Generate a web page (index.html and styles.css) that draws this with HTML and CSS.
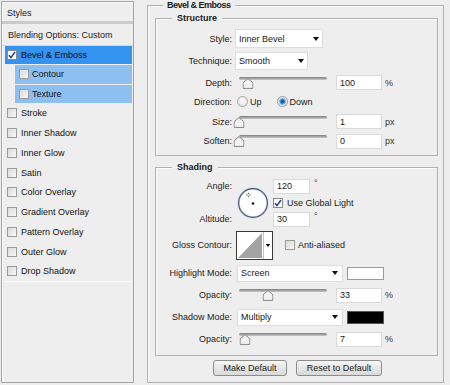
FILE: index.html
```html
<!DOCTYPE html>
<html lang="en">
<head>
    <meta charset="UTF-8">
    <title>Layer Style</title>
    <link rel="stylesheet" href="styles.css">
</head>
<body>
    <div class="dialog">
        <aside class="styles-list">
            <div class="list-head">Styles</div>
            <div class="list-blend">Blending Options: Custom</div>
            <ul class="effects">
                <li class="effect selected">
                    <span class="check on"><svg width="8" height="8" viewBox="0 0 8 8"><path d="M1 4.2 L3 6.6 L7 1" fill="none" stroke="#23408e" stroke-width="1.5"/></svg></span>
                    Bevel &amp; Emboss
                </li>
                <li class="effect sub"><span class="check"></span>Contour</li>
                <li class="effect sub"><span class="check"></span>Texture</li>
                <li class="effect"><span class="check"></span>Stroke</li>
                <li class="effect"><span class="check"></span>Inner Shadow</li>
                <li class="effect"><span class="check"></span>Inner Glow</li>
                <li class="effect"><span class="check"></span>Satin</li>
                <li class="effect"><span class="check"></span>Color Overlay</li>
                <li class="effect"><span class="check"></span>Gradient Overlay</li>
                <li class="effect"><span class="check"></span>Pattern Overlay</li>
                <li class="effect"><span class="check"></span>Outer Glow</li>
                <li class="effect last"><span class="check"></span>Drop Shadow</li>
            </ul>
        </aside>

        <fieldset class="group outer">
            <legend>Bevel &amp; Emboss</legend>

            <fieldset class="group structure">
                <legend>Structure</legend>
                <div class="form structure-form">
                    <div class="row">
                        <span class="label">Style:</span>
                        <div class="select style-select">Inner Bevel<i class="arrow"></i></div>
                    </div>
                    <div class="row">
                        <span class="label">Technique:</span>
                        <div class="select technique-select">Smooth<i class="arrow"></i></div>
                    </div>
                    <div class="row">
                        <span class="label">Depth:</span>
                        <div class="slider"><div class="track"></div><span class="thumb" style="left: 10%"><svg width="11" height="11" viewBox="0 0 11 11"><path d="M5.5 0.6 L10.4 4.8 V10.4 H0.6 V4.8 Z" fill="#f2f2f2" stroke="#858585"/></svg></span></div>
                        <div class="field">100</div>
                        <span class="unit">%</span>
                    </div>
                    <div class="row">
                        <span class="label">Direction:</span>
                        <span class="radio first"></span><span class="radio-text">Up</span>
                        <span class="radio on second"></span><span class="radio-text">Down</span>
                    </div>
                    <div class="row">
                        <span class="label">Size:</span>
                        <div class="slider"><div class="track"></div><span class="thumb" style="left: 0.4%"><svg width="11" height="11" viewBox="0 0 11 11"><path d="M5.5 0.6 L10.4 4.8 V10.4 H0.6 V4.8 Z" fill="#f2f2f2" stroke="#858585"/></svg></span></div>
                        <div class="field">1</div>
                        <span class="unit">px</span>
                    </div>
                    <div class="row">
                        <span class="label">Soften:</span>
                        <div class="slider"><div class="track"></div><span class="thumb" style="left: 0%"><svg width="11" height="11" viewBox="0 0 11 11"><path d="M5.5 0.6 L10.4 4.8 V10.4 H0.6 V4.8 Z" fill="#f2f2f2" stroke="#858585"/></svg></span></div>
                        <div class="field">0</div>
                        <span class="unit">px</span>
                    </div>
                </div>
            </fieldset>

            <fieldset class="group shading">
                <legend>Shading</legend>
                <div class="form shading-form">
                    <div class="angle-block">
                        <span class="label angle-label">Angle:</span>
                        <div class="dial">
                            <svg width="32" height="32" viewBox="0 0 32 32">
                                <circle cx="16" cy="16" r="14.4" fill="#fff" stroke="#cdd2de" stroke-width="2.4"/>
                                <circle cx="16" cy="16" r="14.4" fill="none" stroke="#4e5b84" stroke-width="1.1"/>
                                <circle cx="16" cy="16.5" r="1.3" fill="#111"/>
                                <g fill="#444">
                                    <rect x="10.9" y="5.6" width="0.9" height="1.4"/>
                                    <rect x="10.9" y="8.8" width="0.9" height="1.4"/>
                                    <rect x="9.2" y="7.5" width="1.4" height="0.9"/>
                                    <rect x="12.1" y="7.5" width="1.4" height="0.9"/>
                                </g>
                            </svg>
                        </div>
                        <div class="angle-field">
                            <div class="field small">120</div>
                            <span class="unit deg">°</span>
                        </div>
                        <div class="global-light">
                            <span class="check on"><svg width="8" height="8" viewBox="0 0 8 8"><path d="M1 4.2 L3 6.6 L7 1" fill="none" stroke="#23408e" stroke-width="1.5"/></svg></span>
                            <span>Use Global Light</span>
                        </div>
                        <span class="label altitude-label">Altitude:</span>
                        <div class="altitude-field">
                            <div class="field small">30</div>
                            <span class="unit deg">°</span>
                        </div>
                    </div>

                    <div class="row">
                        <span class="label">Gloss Contour:</span>
                        <div class="contour">
                            <svg width="37" height="29" viewBox="0 0 37 29">
                                <rect x="0.5" y="0.5" width="36" height="28" fill="#fff" stroke="#3a3a3a"/>
                                <polygon points="2,27 26,2 26,27" fill="#a4a4a4"/>
                                <line x1="27.5" y1="1" x2="27.5" y2="28" stroke="#c4c4c4"/>
                                <polygon points="29.8,13 34.2,13 32,16" fill="#000"/>
                            </svg>
                        </div>
                        <span class="check anti"></span>
                        <span class="check-text">Anti-aliased</span>
                    </div>
                    <div class="row">
                        <span class="label">Highlight Mode:</span>
                        <div class="select mode-select">Screen<i class="arrow"></i></div>
                        <span class="swatch white"></span>
                    </div>
                    <div class="row">
                        <span class="label">Opacity:</span>
                        <div class="slider"><div class="track"></div><span class="thumb" style="left: 33%"><svg width="11" height="11" viewBox="0 0 11 11"><path d="M5.5 0.6 L10.4 4.8 V10.4 H0.6 V4.8 Z" fill="#f2f2f2" stroke="#858585"/></svg></span></div>
                        <div class="field">33</div>
                        <span class="unit">%</span>
                    </div>
                    <div class="row">
                        <span class="label">Shadow Mode:</span>
                        <div class="select mode-select">Multiply<i class="arrow"></i></div>
                        <span class="swatch black"></span>
                    </div>
                    <div class="row">
                        <span class="label">Opacity:</span>
                        <div class="slider"><div class="track"></div><span class="thumb" style="left: 7%"><svg width="11" height="11" viewBox="0 0 11 11"><path d="M5.5 0.6 L10.4 4.8 V10.4 H0.6 V4.8 Z" fill="#f2f2f2" stroke="#858585"/></svg></span></div>
                        <div class="field">7</div>
                        <span class="unit">%</span>
                    </div>
                </div>
            </fieldset>

            <div class="buttons">
                <button class="btn make">Make Default</button>
                <button class="btn reset">Reset to Default</button>
            </div>
        </fieldset>
    </div>
</body>
</html>
```

FILE: styles.css
```css
* {
    margin: 0;
    padding: 0;
    box-sizing: border-box;
}

body {
    font-family: 'Liberation Sans', Arial, sans-serif;
    font-size: 9px;
    color: #1a1a1a;
    background: #eeeeee;
    width: 450px;
    height: 385px;
    overflow: hidden;
}

.dialog {
    display: flex;
    align-items: flex-start;
    padding: 1px 0 0 1px;
}

/* left list of effects */
.styles-list {
    width: 133px;
    height: 382px;
    border: 1px solid #a3a3a3;
    box-shadow: inset 1px 1px 0 #fafafa;
    background: #eeeeee;
    flex: none;
}

.list-head {
    height: 22px;
    padding: 3px 0 0 5px;
    display: flex;
    align-items: center;
    border-bottom: 3px solid #cbcbcb;
}

.list-blend {
    height: 22px;
    padding-left: 6px;
    display: flex;
    align-items: center;
    border-bottom: 1px solid #d6d6d6;
}

.effects {
    list-style: none;
}

.effect {
    height: 19.8px;
    margin: 0 1px 0 3px;
    padding-left: 2px;
    display: flex;
    align-items: center;
    gap: 4px;
    color: #111;
}

.effect.selected {
    height: 17.8px;
    background: #3393ef;
    color: #0a0a0a;
}

.effect.sub {
    margin-left: 13px;
    padding-left: 4px;
    gap: 3px;
    background: #8dbff0;
    border-top: 1px solid #eeeeee;
}

.effect.last {
    border-bottom: 1px solid #fafafa;
}

.check {
    width: 10px;
    height: 10px;
    flex: none;
    border: 1px solid #9b9b9b;
    background: linear-gradient(135deg, #d9d9d9, #f9f9f9);
    display: flex;
    align-items: center;
    justify-content: center;
}

.check.on {
    background: #fdfdfd;
    border-color: #8a8a8a;
}

/* group boxes */
.group {
    border: 1px solid #b1b1b1;
    box-shadow: inset 1px 1px 0 #fbfbfb;
    min-width: 0;
}

.group > legend {
    font-weight: 700;
    line-height: 11px;
    padding: 0 4px;
    background: #eeeeee;
}

.outer {
    width: 297px;
    height: 383px;
    margin-left: 13px;
    margin-top: -1px;
}

.outer > legend {
    margin-left: 15px;
    letter-spacing: -0.5px;
}

.structure,
.shading {
    margin: 2px 5px 0 7px;
}

.shading {
    margin-top: 6px;
}

.structure > legend,
.shading > legend {
    margin-left: 16px;
    padding: 0 5px;
}

.form {
    display: grid;
}

.structure-form {
    grid-template-rows: 21px 24px 19px 19px 21px 18px;
    padding: 4px 0 5px;
}

.shading-form {
    grid-template-rows: 49px 30px 20px 18px 20px 18px;
    row-gap: 3px;
    padding: 5px 0 7px;
}

.row {
    display: flex;
    align-items: center;
}

.label {
    width: 76px;
    flex: none;
    text-align: right;
}

/* controls */
.select {
    height: 19px;
    margin-left: 3px;
    padding-left: 3px;
    background: #fff;
    border: 1px solid #dedede;
    display: flex;
    align-items: center;
}

.style-select {
    width: 88px;
}

.technique-select {
    width: 73px;
    height: 18px;
}

.mode-select {
    width: 106px;
    height: 17px;
    margin-left: 5px;
}

.arrow {
    margin-left: auto;
    margin-right: 3px;
    border-left: 3.5px solid transparent;
    border-right: 3.5px solid transparent;
    border-top: 4px solid #111;
}

.mode-select .arrow {
    margin-right: 4px;
}

.slider {
    width: 88px;
    height: 12px;
    margin-left: 7px;
    position: relative;
    flex: none;
}

.track {
    height: 3px;
    border-radius: 2px;
    background: linear-gradient(#7d7d7d, #c9c9c9);
}

.thumb {
    position: absolute;
    top: 1px;
    transform: translateX(-50%);
    line-height: 0;
}

.field {
    width: 46px;
    height: 15px;
    margin-left: 9px;
    padding-left: 3px;
    background: #fff;
    border: 1px solid #dadada;
    display: flex;
    align-items: center;
    flex: none;
}

.field.small {
    width: 37px;
    margin-left: 0;
}

.unit {
    margin-left: 3px;
    color: #333;
}

.unit.deg {
    margin-left: 4px;
    align-self: flex-start;
    line-height: 9px;
}

.radio {
    width: 11px;
    height: 11px;
    border-radius: 50%;
    border: 1px solid #a4a4a4;
    background: radial-gradient(circle at 50% 40%, #ffffff, #dcdcdc);
    flex: none;
}

.radio.first {
    margin-left: 5px;
}

.radio.second {
    margin-left: 15px;
}

.radio.on {
    border-color: #8c9aae;
    background: radial-gradient(circle, #0c4a86 0, #1f6cb3 1.6px, #8db8e2 3px, #e9e9e9 4px, #ffffff 100%);
}

.radio-text {
    margin-left: 2px;
}

/* angle / altitude */
.angle-block {
    display: grid;
    grid-template-columns: 76px 41px 1fr;
    grid-template-rows: 16px 17px 16px;
    align-items: center;
}

.angle-label {
    grid-column: 1;
    grid-row: 1;
}

.altitude-label {
    grid-column: 1;
    grid-row: 3;
}

.dial {
    grid-column: 2;
    grid-row: 1 / 4;
    justify-self: center;
    line-height: 0;
}

.angle-field,
.altitude-field {
    grid-column: 3;
    display: flex;
    align-items: center;
}

.angle-field {
    grid-row: 1;
}

.altitude-field {
    grid-row: 3;
}

.global-light {
    grid-column: 3;
    grid-row: 2;
    display: flex;
    align-items: center;
    gap: 4px;
}

.contour {
    margin-left: 4px;
    line-height: 0;
}

.check.anti {
    margin-left: 12px;
}

.check-text {
    margin-left: 3px;
}

.swatch {
    width: 37px;
    height: 13px;
    margin-left: 4px;
    border: 1px solid #9a9a9a;
}

.swatch.white {
    background: #ffffff;
}

.swatch.black {
    background: #000000;
    border-color: #555;
}

/* buttons */
.buttons {
    display: flex;
    justify-content: center;
    gap: 9px;
    margin-top: 4px;
    padding-left: 4px;
}

.btn {
    height: 16px;
    font-family: inherit;
    font-size: 9px;
    color: #1a1a1a;
    border: 1px solid #8c8c8c;
    border-radius: 3px;
    background: linear-gradient(#f7f7f7, #e6e6e6 50%, #d9d9d9);
}

.btn.make {
    width: 74px;
}

.btn.reset {
    width: 86px;
}
```
